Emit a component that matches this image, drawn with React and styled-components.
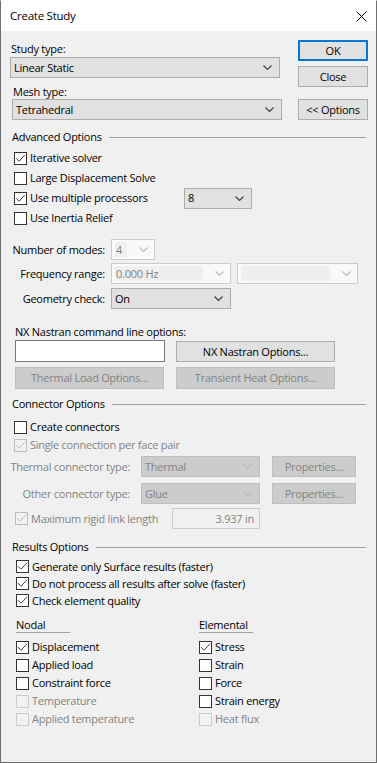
import React from "react";
import styled, { createGlobalStyle, css } from "styled-components";

const GlobalStyle = createGlobalStyle`
  html, body { margin: 0; padding: 0; background: #ffffff; }
  body { font-family: "Open Sans", "Noto Sans", "Liberation Sans", sans-serif; font-size: 11px; letter-spacing: -0.25px; color: #000; }
  * { box-sizing: border-box; }
`;

const DISABLED = "#838383";

const Window = styled.div`
  width: 377px;
  height: 763px;
  border: 1px solid #6f6f6f;
  border-top-color: #ffffff;
  background: #f0f0f0;
  display: flex;
  flex-direction: column;
  line-height: 14px;
`;

const TitleBar = styled.div`
  height: 30px;
  flex: none;
  background: #ffffff;
  display: flex;
  align-items: center;
  justify-content: space-between;
  padding: 0 9px 0 9px;
  font-size: 11.5px;
`;

const Body = styled.div`
  display: flex;
  flex-direction: column;
  padding: 9px 8px 0 9px;
`;

const TopSection = styled.div`
  display: flex;
  gap: 16px;
`;

const LeftCol = styled.div`
  width: 272px;
  padding-top: 2px;
  display: flex;
  flex-direction: column;
  align-items: flex-start;
`;

const RightCol = styled.div`
  width: 70px;
  display: flex;
  flex-direction: column;
`;

const FieldLabel = styled.div`
  height: 14px;
  margin-top: ${(p) => p.$mt || 0}px;
  margin-left: ${(p) => p.$ml || 0}px;
  color: ${(p) => (p.$disabled ? DISABLED : "#000")};
  white-space: nowrap;
`;

const Button = styled.button`
  font: inherit;
  letter-spacing: inherit;
  width: ${(p) => p.$w}px;
  height: ${(p) => p.$h || 21}px;
  margin-top: ${(p) => p.$mt || 0}px;
  padding: 0;
  background: ${(p) => (p.disabled ? "#cccccc" : "#e1e1e1")};
  border: 1px solid ${(p) => (p.disabled ? "#bfbfbf" : "#adadad")};
  color: ${(p) => (p.disabled ? DISABLED : "#000")};
  flex: none;
  ${(p) =>
    p.$default &&
    css`
      border: 2px solid #0078d7;
    `}
`;

const ComboBox = styled.div`
  width: ${(p) => p.$w}px;
  height: ${(p) => p.$h || 21}px;
  margin-left: ${(p) => p.$ml || 0}px;
  margin-top: ${(p) => p.$mt || 0}px;
  flex: none;
  display: flex;
  align-items: center;
  padding-left: 3px;
  background: #e1e1e1;
  border: 1px solid #adadad;
  color: #000;
  ${(p) =>
    p.$disabled &&
    css`
      background: #cccccc;
      border-color: #bfbfbf;
      color: ${DISABLED};
    `}
  ${(p) =>
    p.$faded &&
    css`
      background: #f9f9f9;
      border-color: #cccccc;
      color: ${DISABLED};
      padding: 2px 0 2px 3px;
    `}
`;

const ComboText = styled.span`
  flex: 1;
  white-space: nowrap;
  overflow: hidden;
`;

const ComboField = styled.span`
  flex: 1;
  align-self: stretch;
  display: flex;
  align-items: center;
  padding-left: 1px;
  background: #efefef;
  margin-right: 12px;
  white-space: nowrap;
`;

const Chevron = styled.svg`
  flex: none;
  width: 9px;
  height: 5px;
  margin-right: ${(p) => p.$mr || 7}px;
  polyline {
    fill: none;
    stroke: ${(p) => (p.$light ? "#b9b9b9" : "#3c3c3c")};
    stroke-width: 1.1;
  }
`;

const Arrow = ({ light, mr }) => (
  <Chevron viewBox="0 0 9 5" $light={light} $mr={mr}>
    <polyline points="0.5,0.5 4.5,4.5 8.5,0.5" />
  </Chevron>
);

const Combo = ({ w, ml, mt, disabled, faded, children }) => (
  <ComboBox $w={w} $ml={ml} $mt={mt} $disabled={disabled} $faded={faded}>
    {faded ? <ComboField>{children}</ComboField> : <ComboText>{children}</ComboText>}
    <Arrow light={disabled || faded} mr={faded ? 6 : 7} />
  </ComboBox>
);

const SectionHeader = styled.div`
  display: flex;
  align-items: center;
  height: 14px;
  margin: ${(p) => p.$mt}px 2px 0 2px;
  white-space: nowrap;
  &::after {
    content: "";
    flex: 1;
    height: 1px;
    background: #a0a0a0;
    margin-left: 7px;
  }
`;

const CheckList = styled.div`
  display: flex;
  flex-direction: column;
  margin-top: ${(p) => p.$mt || 0}px;
  margin-left: ${(p) => p.$ml || 0}px;
`;

const CheckRow = styled.div`
  display: flex;
  align-items: center;
  height: ${(p) => p.$h || 20}px;
  margin-top: ${(p) => p.$mt || 0}px;
  margin-left: ${(p) => p.$ml || 0}px;
`;

const CheckItem = styled.label`
  display: flex;
  align-items: center;
  gap: 3px;
  width: ${(p) => (p.$w ? `${p.$w}px` : "auto")};
  flex: none;
  color: ${(p) => (p.$disabled ? DISABLED : "#000")};
  white-space: nowrap;
`;

const Box = styled.span`
  width: 13px;
  height: 13px;
  flex: none;
  border: 1px solid ${(p) => (p.$disabled ? (p.$checked ? "#bcbcbc" : "#cccccc") : "#333333")};
  background: ${(p) => (p.$disabled ? "#f2f2f2" : "#ffffff")};
  display: flex;
  align-items: center;
  justify-content: center;
  svg polyline {
    fill: none;
    stroke: ${(p) => (p.$disabled ? "#bcbcbc" : "#444444")};
    stroke-width: 1;
  }
`;

const Check = ({ checked, disabled, w, children }) => (
  <CheckItem $disabled={disabled} $w={w}>
    <Box $checked={checked} $disabled={disabled}>
      {checked && (
        <svg width="11" height="11" viewBox="0 0 11 11">
          <polyline points="1,5.2 4,8.2 10,1.8" />
        </svg>
      )}
    </Box>
    <span>{children}</span>
  </CheckItem>
);

const FieldRow = styled.div`
  display: flex;
  align-items: center;
  gap: ${(p) => p.$gap || 5}px;
  height: 21px;
  margin-top: ${(p) => p.$mt || 0}px;
`;

const RowLabel = styled.div`
  width: ${(p) => p.$w}px;
  flex: none;
  text-align: right;
  padding-right: 1px;
  white-space: nowrap;
  color: ${(p) => (p.$disabled ? DISABLED : "#000")};
`;

const ButtonRow = styled.div`
  display: flex;
  align-items: flex-start;
  gap: 11px;
  margin-top: ${(p) => p.$mt || 0}px;
  margin-left: 5px;
`;

const TextInput = styled.div`
  width: 150px;
  height: 22px;
  flex: none;
  background: #ffffff;
  border: 1px solid #7a7a7a;
`;

const ValueBox = styled.div`
  width: 88px;
  height: 21px;
  flex: none;
  display: flex;
  align-items: center;
  justify-content: flex-end;
  padding-right: 5px;
  background: #f0f0f0;
  border: 1px solid #cccccc;
  color: ${DISABLED};
`;

const Columns = styled.div`
  display: grid;
  grid-template-columns: 183px auto;
  margin-top: 9px;
  margin-left: 6px;
`;

const ColumnHead = styled.div`
  width: 54px;
  height: 15px;
  border-bottom: 1px solid #a0a0a0;
`;

const CloseIcon = () => (
  <svg width="11" height="11" viewBox="0 0 11 11">
    <path d="M0.5 0.5 L10.5 10.5 M10.5 0.5 L0.5 10.5" stroke="#000" strokeWidth="1" fill="none" />
  </svg>
);

export default function App() {
  return (
    <>
      <GlobalStyle />
      <Window>
        <TitleBar>
          <span>Create Study</span>
          <CloseIcon />
        </TitleBar>
        <Body>
          <TopSection>
            <LeftCol>
              <FieldLabel $ml={1}>Study type:</FieldLabel>
              <Combo w={270} mt={1}>Linear Static</Combo>
              <FieldLabel $ml={3} $mt={7}>Mesh type:</FieldLabel>
              <Combo w={270} ml={2}>Tetrahedral</Combo>
            </LeftCol>
            <RightCol>
              <Button $w={70} $default>OK</Button>
              <Button $w={70} $mt={5}>Close</Button>
              <Button $w={70} $mt={12}>&lt;&lt; Options</Button>
            </RightCol>
          </TopSection>

          <SectionHeader $mt={10}>Advanced Options</SectionHeader>
          <CheckList $mt={4} $ml={4}>
            <CheckRow><Check checked>Iterative solver</Check></CheckRow>
            <CheckRow><Check>Large Displacement Solve</Check></CheckRow>
            <CheckRow>
              <Check checked w={170}>Use multiple processors</Check>
              <Combo w={68}>8</Combo>
            </CheckRow>
            <CheckRow><Check>Use Inertia Relief</Check></CheckRow>
          </CheckList>

          <FieldRow $mt={11}>
            <RowLabel $w={96}>Number of modes:</RowLabel>
            <Combo w={44} faded>4</Combo>
          </FieldRow>
          <FieldRow $mt={3}>
            <RowLabel $w={96}>Frequency range:</RowLabel>
            <Combo w={120} faded>0.000 Hz</Combo>
            <Combo w={121} ml={1} faded></Combo>
          </FieldRow>
          <FieldRow $mt={4}>
            <RowLabel $w={96}>Geometry check:</RowLabel>
            <Combo w={120}>On</Combo>
          </FieldRow>

          <FieldLabel $mt={16} $ml={5}>NX Nastran command line options:</FieldLabel>
          <ButtonRow $mt={1}>
            <TextInput />
            <Button $w={159} $mt={1}>NX Nastran Options...</Button>
          </ButtonRow>
          <ButtonRow $mt={5}>
            <Button $w={149} $h={22} disabled>Thermal Load Options...</Button>
            <Button $w={159} $h={22} disabled style={{ marginLeft: 1 }}>Transient Heat Options...</Button>
          </ButtonRow>

          <SectionHeader $mt={8}>Connector Options</SectionHeader>
          <CheckList $mt={7} $ml={4}>
            <CheckRow $h={18}><Check>Create connectors</Check></CheckRow>
            <CheckRow $h={18}><Check checked disabled>Single connection per face pair</Check></CheckRow>
          </CheckList>
          <FieldRow $mt={2} $gap={10}>
            <RowLabel $w={121} $disabled>Thermal connector type:</RowLabel>
            <Combo w={119} disabled>Thermal</Combo>
            <Button $w={84} disabled style={{ marginLeft: 2 }}>Properties...</Button>
          </FieldRow>
          <FieldRow $mt={6} $gap={10}>
            <RowLabel $w={121} $disabled>Other connector type:</RowLabel>
            <Combo w={119} disabled>Glue</Combo>
            <Button $w={84} disabled style={{ marginLeft: 2 }}>Properties...</Button>
          </FieldRow>
          <CheckRow $h={21} $mt={4} $ml={5}>
            <Check checked disabled w={157}>Maximum rigid link length</Check>
            <ValueBox>3.937 in</ValueBox>
          </CheckRow>

          <SectionHeader $mt={11}>Results Options</SectionHeader>
          <CheckList $mt={4} $ml={6}>
            <CheckRow $h={17}><Check checked>Generate only Surface results (faster)</Check></CheckRow>
            <CheckRow $h={17}><Check checked>Do not process all results after solve (faster)</Check></CheckRow>
            <CheckRow $h={17}><Check checked>Check element quality</Check></CheckRow>
          </CheckList>

          <Columns>
            <div>
              <ColumnHead>Nodal</ColumnHead>
              <CheckList $mt={5}>
                <CheckRow $h={18}><Check checked>Displacement</Check></CheckRow>
                <CheckRow $h={18}><Check>Applied load</Check></CheckRow>
                <CheckRow $h={18}><Check>Constraint force</Check></CheckRow>
                <CheckRow $h={18}><Check disabled>Temperature</Check></CheckRow>
                <CheckRow $h={18}><Check disabled>Applied temperature</Check></CheckRow>
              </CheckList>
            </div>
            <div>
              <ColumnHead>Elemental</ColumnHead>
              <CheckList $mt={5}>
                <CheckRow $h={18}><Check checked>Stress</Check></CheckRow>
                <CheckRow $h={18}><Check>Strain</Check></CheckRow>
                <CheckRow $h={18}><Check>Force</Check></CheckRow>
                <CheckRow $h={18}><Check>Strain energy</Check></CheckRow>
                <CheckRow $h={18}><Check disabled>Heat flux</Check></CheckRow>
              </CheckList>
            </div>
          </Columns>
        </Body>
      </Window>
    </>
  );
}
